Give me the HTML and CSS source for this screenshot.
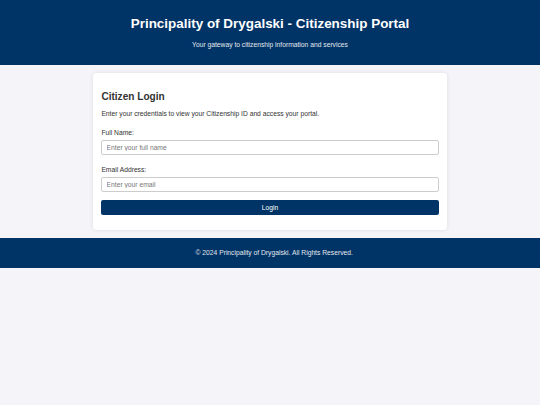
FILE: index.html
```html
<!DOCTYPE html>
<html lang="en">
<head>
<meta charset="utf-8">
<title>Principality of Drygalski - Citizenship Portal</title>
<link rel="stylesheet" href="styles.css">
</head>
<body>
<header class="site-header">
  <h1 class="site-title">Principality of Drygalski - Citizenship Portal</h1>
  <p class="site-tagline">Your gateway to citizenship information and services</p>
</header>
<main class="container">
  <section class="card">
    <h2 class="card-title">Citizen Login</h2>
    <p class="card-intro">Enter your credentials to view your Citizenship ID and access your portal.</p>
    <form class="login-form">
      <div class="field">
        <label class="field-label" for="name">Full Name:</label>
        <input class="field-input" id="name" type="text" placeholder="Enter your full name">
      </div>
      <div class="field">
        <label class="field-label" for="email">Email Address:</label>
        <input class="field-input" id="email" type="email" placeholder="Enter your email">
      </div>
      <button class="login-btn" type="button">Login</button>
    </form>
  </section>
</main>
<footer class="site-footer">
  <p class="footer-text">© 2024 Principality of Drygalski. All Rights Reserved.</p>
</footer>
</body>
</html>
```
FILE: styles.css
```css
* { box-sizing: border-box; }
html, body { margin: 0; padding: 0; }
body {
  font-family: "Liberation Sans", Arial, sans-serif;
  font-size: 6.72px;
  line-height: 7.73px;
  background: #f4f4f9;
  color: #333;
}
.site-header {
  background: #003366;
  color: #fff;
  text-align: center;
  padding: 16.3px 0 16.6px;
}
.site-title {
  margin: 0;
  font-size: 13.44px;
  font-weight: bold;
  line-height: 15.5px;
}
.site-tagline {
  margin: 8.8px 0 0;
  color: #e3e9f0;
}
.container {
  width: 354px;
  margin: 8.3px auto 7.8px;
}
.card {
  background: #fff;
  border-radius: 3.4px;
  box-shadow: 0 0 4px rgba(0, 0, 0, 0.1);
  padding: 8.4px 8.4px 14.7px;
}
.card-title {
  margin: 9px 0 0;
  font-size: 10.08px;
  line-height: 11.6px;
  font-weight: bold;
  color: #333;
}
.card-intro {
  margin: 7.5px 0 0;
}
.login-form {
  display: flex;
  flex-direction: column;
  gap: 10.8px;
  margin-top: 11.9px;
}
.field {
  display: flex;
  flex-direction: column;
  gap: 3px;
}
.field:last-of-type { margin-bottom: -3.4px; }
.field-input {
  height: 15.3px;
  padding: 0 4.2px;
  border: 0.42px solid #ccc;
  border-radius: 2.1px;
  font-family: inherit;
  font-size: 6.72px;
  color: #333;
  background: #fff;
}
.field-input::placeholder { color: #777; }
.login-btn {
  height: 15.7px;
  border: none;
  border-radius: 2.1px;
  background: #003366;
  color: #fff;
  font-family: inherit;
  font-size: 6.72px;
  padding: 0;
}
.site-footer {
  background: #003366;
  color: #fff;
  text-align: center;
  padding: 11px 0 11px 8.4px;
}
.footer-text {
  margin: 0;
  color: #e3e9f0;
}
```
